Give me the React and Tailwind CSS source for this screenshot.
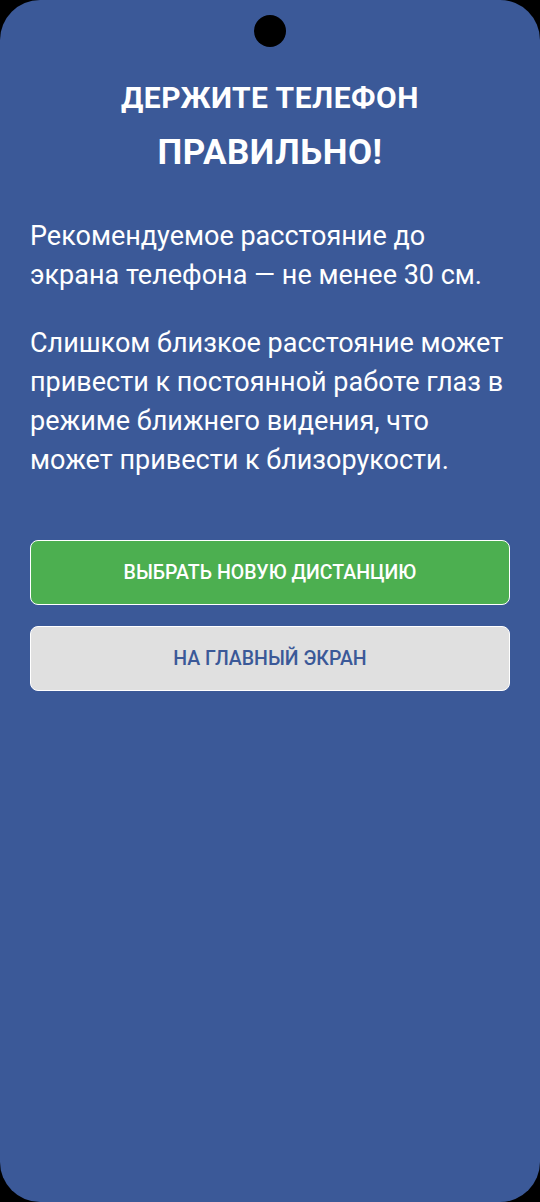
import React from "react";

function App() {
  return (
    <div className="bg-black w-[540px] h-[1202px]" style={{ fontFamily: "Roboto, 'Noto Sans', sans-serif" }}>
      <div className="relative bg-[#3b5998] w-full h-full rounded-[40px] overflow-hidden">
        <div className="absolute left-[254px] top-[15px] w-[32px] h-[32px] rounded-full bg-black" />

        <div className="pt-[80px] px-[30px]">
          <h1 className="text-center text-white font-bold tracking-[0.5px]">
            <div className="text-[30px] leading-[36px]">ДЕРЖИТЕ ТЕЛЕФОН</div>
            <div className="text-[35px] leading-[42px] mt-[16px]">ПРАВИЛЬНО!</div>
          </h1>

          <div className="mt-[43px] text-white text-[27px] leading-[39px]">
            <p>Рекомендуемое расстояние до экрана телефона — не менее 30 см.</p>
            <p className="mt-[29px]">
              Слишком близкое расстояние может привести к постоянной работе глаз в
              режиме ближнего видения, что может привести к близорукости.
            </p>
          </div>

          <div className="mt-[60px] flex flex-col gap-[21px]">
            <button className="h-[65px] rounded-[8px] border border-white bg-[#4caf50] text-white text-[19.5px] font-medium uppercase">
              Выбрать новую дистанцию
            </button>
            <button className="h-[65px] rounded-[8px] border border-white bg-[#e0e0e0] text-[#3b5998] text-[19.5px] font-medium uppercase">
              На главный экран
            </button>
          </div>
        </div>
      </div>
    </div>
  );
}

export default App;
